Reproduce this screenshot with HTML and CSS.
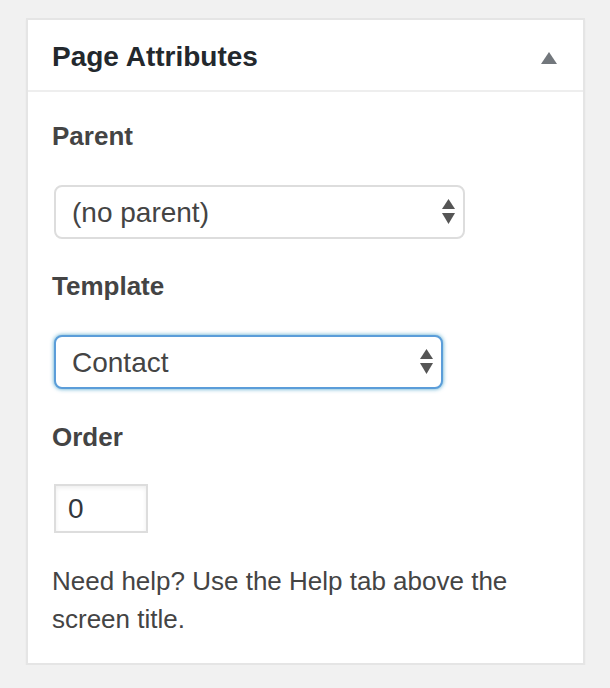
FILE: index.html
```html
<!DOCTYPE html>
<html lang="en">
<head>
  <meta charset="UTF-8" />
  <title>Page Attributes</title>
  <meta name="viewport" content="width=device-width, initial-scale=1.0" />
  <link rel="stylesheet" href="styles.css">
</head>
<body>

  <div class="postbox">
    <div class="postbox-header">
      <h2>Page Attributes</h2>
      <span class="toggle-indicator"></span>
    </div>

    <div class="inside">
      <p class="attr-label">Parent</p>
      <div class="select-wrap parent-select">
        <select>
          <option>(no parent)</option>
        </select>
        <svg class="select-arrows" width="13" height="25" viewBox="0 0 13 25">
          <polygon points="6.5,0 13,10 0,10" />
          <polygon points="0,14 13,14 6.5,25" />
        </svg>
      </div>

      <p class="attr-label">Template</p>
      <div class="select-wrap template-select focused">
        <select>
          <option>Contact</option>
        </select>
        <svg class="select-arrows" width="13" height="25" viewBox="0 0 13 25">
          <polygon points="6.5,0 13,10 0,10" />
          <polygon points="0,14 13,14 6.5,25" />
        </svg>
      </div>

      <p class="attr-label">Order</p>
      <input type="text" class="menu-order" value="0" />

      <p class="help">Need help? Use the Help tab above the screen title.</p>
    </div>
  </div>

</body>
</html>
```

FILE: styles.css
```css
body {
  margin: 0;
  background: #f1f1f1;
  font-family: "Liberation Sans", Arial, sans-serif;
  color: #444;
}

.postbox {
  margin: 18px 0 0 26px;
  width: 559px;
  box-sizing: border-box;
  background: #fff;
  border: 2px solid #e5e5e5;
  box-shadow: 0 2px 2px rgba(0, 0, 0, 0.04);
}

.postbox-header {
  display: flex;
  justify-content: space-between;
  align-items: flex-start;
  height: 72px;
  box-sizing: border-box;
  padding: 17px 26px 0 24px;
  border-bottom: 2px solid #eee;
}
.postbox-header h2 {
  margin: 0;
  font-size: 28px;
  line-height: 40px;
  font-weight: bold;
  color: #23282d;
}
.toggle-indicator {
  width: 0;
  height: 0;
  margin-top: 15px;
  border-left: 8px solid transparent;
  border-right: 8px solid transparent;
  border-bottom: 12px solid #72777c;
}

.inside {
  padding: 25px 24px 25px 24px;
}

.attr-label {
  margin: 0;
  font-size: 26px;
  line-height: 39px;
  font-weight: bold;
  color: #444;
}

.select-wrap {
  position: relative;
  margin: 29px 0 28px 2px;
}
.select-wrap select {
  display: block;
  -webkit-appearance: none;
  appearance: none;
  height: 54px;
  box-sizing: border-box;
  padding: 0 40px 0 16px;
  font-family: inherit;
  font-size: 28px;
  color: #444;
  background: #fff;
  border: 2px solid #ddd;
  border-radius: 8px;
  outline: none;
}
.parent-select select { width: 411px; }
.template-select select { width: 389px; }
.template-select { margin-bottom: 29px; }
.focused select {
  border-color: #5b9dd9;
  box-shadow: 0 0 4px rgba(30, 140, 190, 0.8);
}
.select-arrows {
  position: absolute;
  top: 14px;
  fill: #555;
}
.parent-select .select-arrows { left: 388px; }
.template-select .select-arrows { left: 366px; }

.menu-order {
  display: block;
  margin: 27px 0 29px 2px;
  width: 94px;
  height: 49px;
  box-sizing: border-box;
  padding: 0 12px;
  font-family: inherit;
  font-size: 28px;
  color: #32373c;
  border: 2px solid #ddd;
  box-shadow: inset 0 2px 4px rgba(0, 0, 0, 0.07);
  outline: none;
}

.help {
  margin: 0;
  font-size: 26px;
  line-height: 38px;
  color: #444;
}
```
